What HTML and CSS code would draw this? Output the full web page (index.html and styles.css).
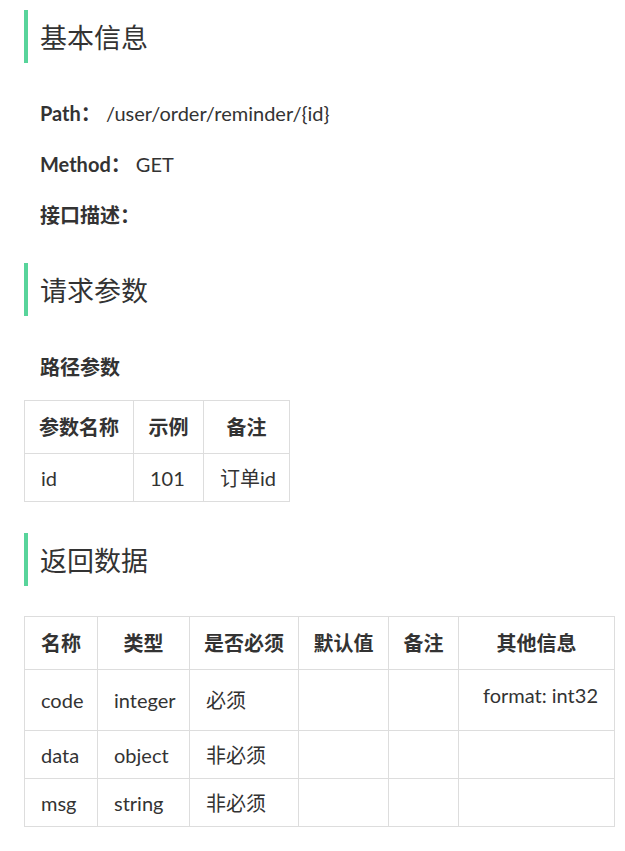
FILE: index.html
```html
<!DOCTYPE html>
<html lang="zh">
<head>
<meta charset="utf-8">
<link rel="stylesheet" href="styles.css">
</head>
<body>
<div class="doc">
  <h2 class="title title-first">基本信息</h2>
  <p class="meta meta-path"><b>Path：</b> /user/order/reminder/{id}</p>
  <p class="meta"><b>Method：</b> GET</p>
  <p class="meta"><b>接口描述：</b></p>

  <h2 class="title title-req">请求参数</h2>
  <p class="sub">路径参数</p>
  <table class="grid grid-params">
    <colgroup>
      <col class="c-pname"><col class="c-example"><col class="c-note">
    </colgroup>
    <thead>
      <tr><th>参数名称</th><th>示例</th><th>备注</th></tr>
    </thead>
    <tbody>
      <tr><td>id</td><td>101</td><td>订单id</td></tr>
    </tbody>
  </table>

  <h2 class="title title-resp">返回数据</h2>
  <table class="grid grid-resp">
    <colgroup>
      <col class="c-name"><col class="c-type"><col class="c-req"><col class="c-def"><col class="c-rnote"><col class="c-other">
    </colgroup>
    <thead>
      <tr><th>名称</th><th>类型</th><th>是否必须</th><th>默认值</th><th>备注</th><th>其他信息</th></tr>
    </thead>
    <tbody>
      <tr class="row-tall"><td>code</td><td>integer</td><td>必须</td><td></td><td></td><td class="other">format: int32</td></tr>
      <tr><td>data</td><td>object</td><td>非必须</td><td></td><td></td><td></td></tr>
      <tr><td>msg</td><td>string</td><td>非必须</td><td></td><td></td><td></td></tr>
    </tbody>
  </table>
</div>
</body>
</html>
```

FILE: styles.css
```css
html, body {
  margin: 0;
  padding: 0;
  background: #fff;
}
body {
  font-family: "Lato", "Noto Sans CJK SC", sans-serif;
  color: #333;
  font-size: 20px;
}
.doc {
  padding: 0 0 0 24px;
}
.title {
  margin: 0;
  border-left: 4px solid #58d49b;
  padding: 3px 0 0 12px;
  height: 50px;
  line-height: 50px;
  font-size: 27px;
  font-weight: normal;
  color: #333;
}
.title-first { margin-top: 10px; }
.title-req { margin-top: 35px; }
.title-resp { margin-top: 31px; }
.meta {
  margin: 25px 0 0 16px;
  line-height: 26px;
  height: 26px;
}
.meta-path { margin-top: 37px; }
.meta b {
  font-weight: bold;
}
.sub {
  margin: 38px 0 0 16px;
  line-height: 26px;
  height: 26px;
  font-weight: bold;
}
.grid {
  border-collapse: collapse;
  table-layout: fixed;
  margin-top: 20px;
}
.grid-params { width: 266px; }
.grid-resp { width: 591px; margin-top: 30px; }
.grid th, .grid td {
  border: 1px solid #ddd;
  padding: 0 0 0 16px;
  line-height: 26px;
  white-space: nowrap;
}
.grid th {
  height: 52px;
  font-weight: bold;
  text-align: center;
  padding: 0;
}
.grid td {
  height: 47px;
  text-align: left;
}
.grid .row-tall td { height: 60px; }
.grid td.other {
  text-align: right;
  vertical-align: top;
  padding: 12px 16px 0 0;
  height: 48px;
}
.c-pname { width: 109px; }
.c-example { width: 70px; }
.c-note { width: 86px; }
.c-name { width: 73px; }
.c-type { width: 92px; }
.c-req { width: 109px; }
.c-def { width: 90px; }
.c-rnote { width: 70px; }
.c-other { width: 156px; }
```
